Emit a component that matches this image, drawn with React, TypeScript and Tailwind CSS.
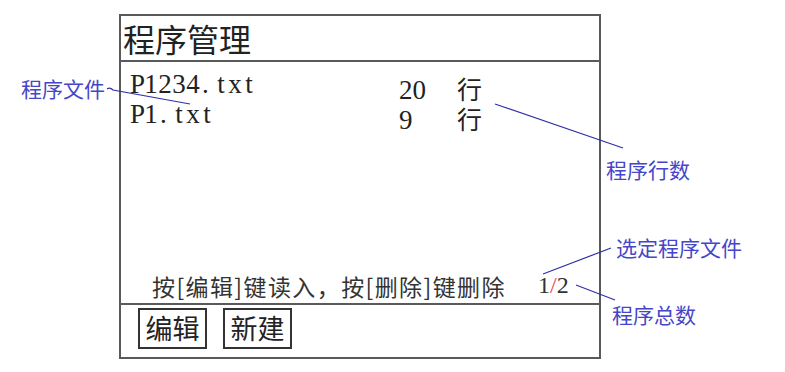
const files = [
  { name: 'P1234.txt', lines: 20 },
  { name: 'P1.txt', lines: 9 },
];

const notes = [
  { text: '程序文件', className: 'left-[21px] top-[78px]' },
  { text: '程序行数', className: 'left-[606px] top-[159px]' },
  { text: '选定程序文件', className: 'left-[616px] top-[237px]' },
  { text: '程序总数', className: 'left-[612px] top-[304px]' },
];

// SimSun-like half-width cells for the file names
function CellText({ text }: { text: string }) {
  return (
    <span className="flex">
      {text.split('').map((ch, i) => (
        <span
          key={i}
          className={ch === '.' ? 'w-[14px] pl-[2px] text-left' : 'w-[14px] text-center'}
        >
          {ch}
        </span>
      ))}
    </span>
  );
}

export default function App() {
  return (
    <div className="relative w-[785px] h-[372px] overflow-hidden bg-white pt-[14px] pl-[119px] text-[#222] font-['Noto_Sans_CJK_SC',sans-serif]">
      <div className="flex flex-col w-[482px] h-[345px] border-2 border-[#5a5a5a]">
        <div className="h-[46px] border-b-2 border-[#5a5a5a] pl-[2px] text-[32px] leading-[44px]">
          程序管理
        </div>

        <div className="flex-1 flex flex-col justify-between">
          <div className="flex flex-col pt-[7px] pl-[9px]">
            {files.map((f) => (
              <div key={f.name} className="flex h-[30px]">
                <div className="w-[269px] text-[27px] leading-[30px] font-['Liberation_Serif',serif]">
                  <CellText text={f.name} />
                </div>
                <div className="flex items-baseline mt-[7px]">
                  <span className="w-[58px] text-[27px] leading-[24px] font-['Liberation_Serif',serif]">
                    {f.lines}
                  </span>
                  <span className="text-[25px] leading-[24px]">行</span>
                </div>
              </div>
            ))}
          </div>

          <div className="flex items-end pl-[31px] pb-[2px] text-[#333]">
            <span className="w-[386px] text-[23px] leading-[30px] tracking-[1.4px] whitespace-nowrap">
              按[编辑]键读入，按[删除]键删除
            </span>
            <span className="text-[24px] leading-[32px] font-['Liberation_Serif',serif]">
              1<span className="text-[#e05050]">/</span>2
            </span>
          </div>
        </div>

        <div className="flex items-start gap-4 h-[54px] border-t-2 border-[#5a5a5a] pt-[3px] pl-[17px]">
          <div className="flex items-center justify-center w-[69px] h-[41px] border-2 border-[#333] text-[27px]">
            编辑
          </div>
          <div className="flex items-center justify-center w-[69px] h-[41px] border-2 border-[#333] text-[27px]">
            新建
          </div>
        </div>
      </div>

      {notes.map((n) => (
        <span
          key={n.text}
          className={`absolute ${n.className} text-[21px] leading-[21px] text-[#4646c8] whitespace-nowrap`}
        >
          {n.text}
        </span>
      ))}

      <svg className="absolute inset-0 pointer-events-none" width="785" height="372">
        <g stroke="#2f2fa8" strokeWidth="1.2" fill="none">
          <path d="M107 89 Q110 87 113 90 L190 104" />
          <line x1="495" y1="104" x2="623" y2="148" />
          <line x1="543" y1="274" x2="611" y2="248" />
          <line x1="576" y1="285" x2="615" y2="300" />
        </g>
      </svg>
    </div>
  );
}
